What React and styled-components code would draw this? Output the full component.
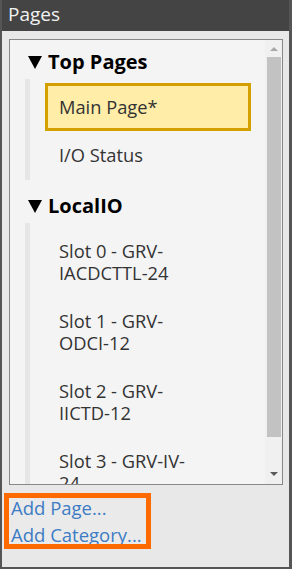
import React from "react";
import styled, { createGlobalStyle } from "styled-components";

const GlobalStyle = createGlobalStyle`
  html, body {
    margin: 0;
    padding: 0;
    background: #e8e8e8;
  }
  * {
    box-sizing: border-box;
  }
`;

const Panel = styled.div`
  width: 292px;
  height: 569px;
  display: flex;
  flex-direction: column;
  background: #e8e8e8;
  border: 2px solid #555555;
  border-right-width: 3px;
  border-top-width: 0;
  font-family: "Open Sans", "Liberation Sans", sans-serif;
  overflow: hidden;
`;

const TitleBar = styled.div`
  height: 31px;
  flex-shrink: 0;
  margin: 0 -3px 0 -2px;
  padding: 2px 0 4px 8px;
  background: #444444;
  color: #f2f2f2;
  font-size: 19px;
  line-height: 25px;
`;

const ListBox = styled.div`
  height: 446px;
  flex-shrink: 0;
  margin: 8px 6px 0 7px;
  display: flex;
  background: #f4f4f4;
  border: 1px solid #888888;
`;

const Scroller = styled.div`
  flex: 1;
  overflow: hidden;
  min-width: 0;
`;

const Header = styled.div`
  display: flex;
  align-items: center;
  gap: 6px;
  margin-top: ${(p) => (p.$first ? "0" : "4px")};
  padding: 9px 0 4px 18px;
  font-size: 20px;
  font-weight: 700;
  line-height: 26px;
  color: #000;
`;

const Caret = styled.span`
  width: 0;
  height: 0;
  border-left: 7.5px solid transparent;
  border-right: 7.5px solid transparent;
  border-top: 13px solid #000;
  margin-top: 1px;
`;

const Group = styled.div`
  margin: 0 14px 0 15px;
  border-left: 5px solid #e6e6e6;
  padding: 4px 0 1px 15px;
`;

const Item = styled.div`
  border: 3px solid ${(p) => (p.$selected ? "#d3a000" : "transparent")};
  background: ${(p) => (p.$selected ? "#ffeda8" : "transparent")};
  padding: 10px 12px 10px 11px;
  font-size: 18.3px;
  line-height: 22px;
  color: #333333;
  white-space: pre-line;
`;

const Scrollbar = styled.div`
  width: 17px;
  flex-shrink: 0;
  display: flex;
  flex-direction: column;
  background: #f0f0f0;
`;

const ArrowCell = styled.div`
  height: 17px;
  display: flex;
  align-items: center;
  justify-content: center;
`;

const Arrow = styled.span`
  width: 0;
  height: 0;
  border-left: 4px solid transparent;
  border-right: 4px solid transparent;
  ${(p) =>
    p.$down
      ? "border-top: 4px solid #5a5a5a; margin-top: -3px;"
      : "border-bottom: 4px solid #a8a8a8; margin-top: 1px;"}
`;

const Track = styled.div`
  flex: 1;
  padding: 0 1px 0 2px;
`;

const Thumb = styled.div`
  height: 380px;
  background: #c2c2c2;
`;

const LinksBox = styled.div`
  width: 147px;
  height: 56px;
  margin: 8px 0 0 2px;
  border: 5px solid #ff6a00;
  background: #eaeaea;
  display: flex;
  flex-direction: column;
  justify-content: center;
  overflow: hidden;
  padding-left: 2px;
`;

const Link = styled.a`
  display: block;
  flex-shrink: 0;
  font-size: 18.5px;
  line-height: 27px;
  color: #3d7cc4;
  text-decoration: none;
  white-space: nowrap;
  cursor: pointer;
`;

const sections = [
  {
    title: "Top Pages",
    items: [
      { id: 1, label: "Main Page*", selected: true },
      { id: 2, label: "I/O Status" },
    ],
  },
  {
    title: "LocalIO",
    items: [
      { id: 3, label: "Slot 0 - GRV-\nIACDCTTL-24" },
      { id: 4, label: "Slot 1 - GRV-\nODCI-12" },
      { id: 5, label: "Slot 2 - GRV-\nIICTD-12" },
      { id: 6, label: "Slot 3 - GRV-IV-\n24" },
    ],
  },
];

function App() {
  return (
    <>
      <GlobalStyle />
      <Panel>
        <TitleBar>Pages</TitleBar>
        <ListBox>
          <Scroller>
            {sections.map((s, index) => (
              <div key={s.title}>
                <Header $first={index === 0}>
                  <Caret />
                  {s.title}
                </Header>
                <Group>
                  {s.items.map((item) => (
                    <Item key={item.id} $selected={item.selected}>
                      {item.label}
                    </Item>
                  ))}
                </Group>
              </div>
            ))}
          </Scroller>
          <Scrollbar>
            <ArrowCell>
              <Arrow />
            </ArrowCell>
            <Track>
              <Thumb />
            </Track>
            <ArrowCell>
              <Arrow $down />
            </ArrowCell>
          </Scrollbar>
        </ListBox>
        <LinksBox>
          <Link>Add Page...</Link>
          <Link>Add Category...</Link>
        </LinksBox>
      </Panel>
    </>
  );
}

export default App;
